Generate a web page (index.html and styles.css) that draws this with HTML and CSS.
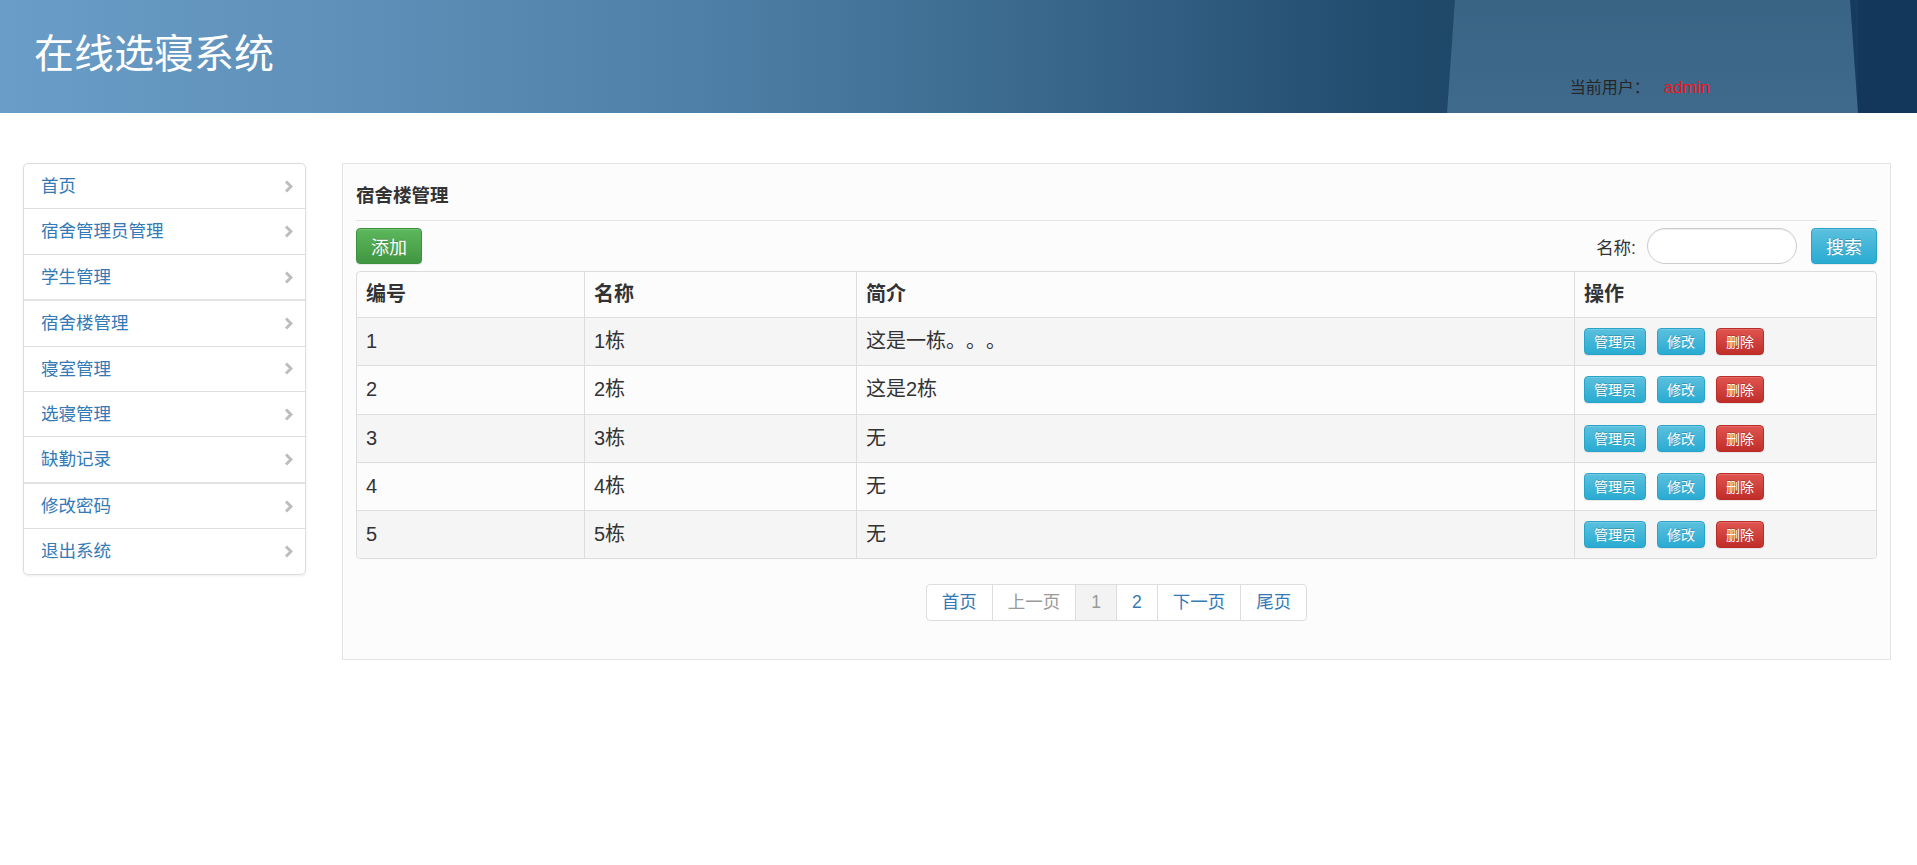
FILE: index.html
```html
<!DOCTYPE html>
<html lang="zh-CN">
<head>
    <meta charset="UTF-8">
    <meta name="viewport" content="width=device-width, initial-scale=1.0">
    <title>在线选寝系统</title>
    <link rel="stylesheet" href="styles.css">
</head>
<body>

    <header class="topbar">
        <h1 class="brand">在线选寝系统</h1>
        <div class="user-info">当前用户：<span class="user-name">admin</span></div>
    </header>

    <div class="layout">

        <!-- 左侧菜单 -->
        <nav class="side-menu">
            <a class="menu-item" href="#">首页<svg class="chevron" viewBox="0 0 9 13"><path d="M2 1.5l5 5-5 5"/></svg></a>
            <a class="menu-item" href="#">宿舍管理员管理<svg class="chevron" viewBox="0 0 9 13"><path d="M2 1.5l5 5-5 5"/></svg></a>
            <a class="menu-item" href="#">学生管理<svg class="chevron" viewBox="0 0 9 13"><path d="M2 1.5l5 5-5 5"/></svg></a>
            <a class="menu-item group-start" href="#">宿舍楼管理<svg class="chevron" viewBox="0 0 9 13"><path d="M2 1.5l5 5-5 5"/></svg></a>
            <a class="menu-item" href="#">寝室管理<svg class="chevron" viewBox="0 0 9 13"><path d="M2 1.5l5 5-5 5"/></svg></a>
            <a class="menu-item" href="#">选寝管理<svg class="chevron" viewBox="0 0 9 13"><path d="M2 1.5l5 5-5 5"/></svg></a>
            <a class="menu-item" href="#">缺勤记录<svg class="chevron" viewBox="0 0 9 13"><path d="M2 1.5l5 5-5 5"/></svg></a>
            <a class="menu-item group-start" href="#">修改密码<svg class="chevron" viewBox="0 0 9 13"><path d="M2 1.5l5 5-5 5"/></svg></a>
            <a class="menu-item" href="#">退出系统<svg class="chevron" viewBox="0 0 9 13"><path d="M2 1.5l5 5-5 5"/></svg></a>
        </nav>

        <!-- 宿舍楼列表 -->
        <main class="content-panel">
            <h3 class="panel-title">宿舍楼管理</h3>

            <div class="toolbar">
                <button class="btn btn-success btn-lg" type="button">添加</button>
                <form class="search-form">
                    <label for="buildName">名称:</label>
                    <input id="buildName" type="text">
                    <button class="btn btn-info btn-lg" type="button">搜索</button>
                </form>
            </div>

            <table class="data-table">
                <colgroup>
                    <col style="width: 227px">
                    <col style="width: 272px">
                    <col style="width: 718px">
                    <col>
                </colgroup>
                <thead>
                    <tr><th>编号</th><th>名称</th><th>简介</th><th>操作</th></tr>
                </thead>
                <tbody>
                    <tr>
                        <td>1</td><td>1栋</td><td>这是一栋。。。</td>
                        <td><div class="actions"><button class="btn btn-info btn-xs">管理员</button><button class="btn btn-info btn-xs">修改</button><button class="btn btn-danger btn-xs">删除</button></div></td>
                    </tr>
                    <tr>
                        <td>2</td><td>2栋</td><td>这是2栋</td>
                        <td><div class="actions"><button class="btn btn-info btn-xs">管理员</button><button class="btn btn-info btn-xs">修改</button><button class="btn btn-danger btn-xs">删除</button></div></td>
                    </tr>
                    <tr>
                        <td>3</td><td>3栋</td><td>无</td>
                        <td><div class="actions"><button class="btn btn-info btn-xs">管理员</button><button class="btn btn-info btn-xs">修改</button><button class="btn btn-danger btn-xs">删除</button></div></td>
                    </tr>
                    <tr>
                        <td>4</td><td>4栋</td><td>无</td>
                        <td><div class="actions"><button class="btn btn-info btn-xs">管理员</button><button class="btn btn-info btn-xs">修改</button><button class="btn btn-danger btn-xs">删除</button></div></td>
                    </tr>
                    <tr>
                        <td>5</td><td>5栋</td><td>无</td>
                        <td><div class="actions"><button class="btn btn-info btn-xs">管理员</button><button class="btn btn-info btn-xs">修改</button><button class="btn btn-danger btn-xs">删除</button></div></td>
                    </tr>
                </tbody>
            </table>

            <ul class="pager">
                <li><a href="#">首页</a></li>
                <li class="disabled"><span>上一页</span></li>
                <li class="current"><span>1</span></li>
                <li><a href="#">2</a></li>
                <li><a href="#">下一页</a></li>
                <li><a href="#">尾页</a></li>
            </ul>
        </main>
    </div>

</body>
</html>
```

FILE: styles.css
```css
body {
    margin: 0;
    font-family: "Liberation Sans", "Noto Sans CJK SC", sans-serif;
    color: #333;
    background-color: #fff;
    text-spacing-trim: space-all;
}

/* 顶部横幅 */
.topbar {
    position: relative;
    height: 113px;
    display: flex;
    justify-content: space-between;
    padding: 0 207px 0 34px;
    overflow: hidden;
    background: linear-gradient(90deg, #6a9dc7 0%, #5e90b9 18%, #4f80a7 36%, #3f6e93 50%, #2f5c80 62%, #254f71 70%, #1f4869 75%, #14395c 100%);
}

.topbar::before {
    content: "";
    position: absolute;
    top: 0;
    bottom: 0;
    left: 1447px;
    width: 411px;
    clip-path: polygon(8px 0, 403px 0, 411px 100%, 0 100%);
    background: linear-gradient(180deg, #3a6484 0%, #3f6a8b 100%);
}

.topbar::after {
    content: "";
    position: absolute;
    top: 0;
    bottom: 0;
    left: 1858px;
    right: 0;
    background: #12375a;
}

.brand {
    position: relative;
    z-index: 1;
    margin: 0;
    padding-top: 30px;
    font-family: "Noto Sans CJK SC", sans-serif;
    font-size: 40px;
    font-weight: 400;
    line-height: 42px;
    color: #fff;
}

.user-info {
    position: relative;
    z-index: 1;
    align-self: flex-end;
    margin-bottom: 16px;
    font-size: 16px;
    line-height: 18px;
    color: #262626;
}

.user-name {
    margin-left: 14px;
    font-size: 17px;
    color: #f0141e;
}

/* 主体布局 */
.layout {
    display: flex;
    align-items: flex-start;
    gap: 36px;
    padding: 50px 26px 0 23px;
}

.side-menu {
    width: 283px;
    flex-shrink: 0;
    display: flex;
    flex-direction: column;
    background-color: #fff;
    border: 1px solid #ddd;
    border-radius: 5px;
    box-shadow: 0 1px 3px rgba(0, 0, 0, 0.08);
    box-sizing: border-box;
}

.menu-item {
    display: flex;
    justify-content: space-between;
    align-items: center;
    padding: 10px 12px 10px 17px;
    font-size: 17.5px;
    line-height: 24.4px;
    color: #337ab7;
    text-decoration: none;
    border-top: 1px solid #ddd;
}

.menu-item:first-child {
    border-top: none;
}

.menu-item.group-start {
    border-top: 2px solid #e3e3e3;
}

.chevron {
    width: 9px;
    height: 13px;
}

.chevron path {
    fill: none;
    stroke: #bdbdbd;
    stroke-width: 3;
}

.content-panel {
    flex: 1;
    min-width: 0;
    padding: 18px 13px 38px;
    background-color: #fcfcfc;
    border: 1px solid #e3e3e3;
}

.panel-title {
    margin: 0;
    padding-bottom: 10px;
    font-size: 18.5px;
    font-weight: 700;
    line-height: 28px;
    border-bottom: 1px solid #e5e5e5;
}

.toolbar {
    display: flex;
    justify-content: space-between;
    align-items: center;
    margin: 7px 0;
}

.search-form {
    display: flex;
    align-items: center;
    margin: 0;
}

.search-form label {
    font-size: 17.5px;
    margin-right: 11px;
}

.search-form input {
    width: 150px;
    height: 36px;
    margin-right: 14px;
    padding: 0 14px;
    box-sizing: border-box;
    border: 1px solid #ccc;
    border-radius: 18px;
    background-color: #fff;
    box-shadow: inset 0 1px 1px rgba(0, 0, 0, 0.075);
    font-size: 16px;
}

/* 按钮 */
.btn {
    display: inline-block;
    border: 1px solid transparent;
    border-radius: 4px;
    color: #fff;
    font-family: "Noto Sans CJK SC", sans-serif;
    text-shadow: 0 -1px 0 rgba(0, 0, 0, 0.2);
    box-shadow: inset 0 1px 0 rgba(255, 255, 255, 0.15), 0 1px 1px rgba(0, 0, 0, 0.075);
    cursor: pointer;
}

.btn-lg {
    height: 36px;
    padding: 0 14px;
    font-size: 18px;
    line-height: 34px;
}

.btn-xs {
    height: 27px;
    padding: 0 9px;
    font-size: 14px;
    line-height: 25px;
}

.btn-success {
    background-image: linear-gradient(to bottom, #5cb85c 0, #419641 100%);
    border-color: #3e8f3e;
}

.btn-info {
    background-image: linear-gradient(to bottom, #5bc0de 0, #2aabd2 100%);
    border-color: #28a4c9;
}

.btn-danger {
    background-image: linear-gradient(to bottom, #e0544f 0, #c12e2a 100%);
    border-color: #b92c28;
}

/* 数据表格 */
.data-table {
    width: 100%;
    table-layout: fixed;
    border-collapse: separate;
    border-spacing: 0;
    border: 1px solid #ddd;
    border-radius: 4px;
    font-size: 20px;
}

.data-table th,
.data-table td {
    text-align: left;
    vertical-align: middle;
    padding: 10px 9px;
    border-left: 1px solid #ddd;
}

.data-table th:first-child,
.data-table td:first-child {
    border-left: none;
}

.data-table th {
    line-height: 25px;
    font-weight: 700;
}

.data-table td {
    line-height: 27.3px;
    border-top: 1px solid #ddd;
}

.data-table tbody tr:nth-child(odd) td {
    background-color: #f5f5f5;
}

.data-table tbody tr:last-child td:first-child {
    border-bottom-left-radius: 4px;
}

.data-table tbody tr:last-child td:last-child {
    border-bottom-right-radius: 4px;
}

.actions {
    display: flex;
    gap: 11px;
}

/* 分页 */
.pager {
    display: flex;
    justify-content: center;
    list-style: none;
    margin: 25px 0 0;
    padding: 0;
    font-size: 17.5px;
}

.pager li > a,
.pager li > span {
    display: block;
    margin-left: -1px;
    padding: 5px 15px;
    line-height: 25px;
    color: #337ab7;
    text-decoration: none;
    background-color: #fff;
    border: 1px solid #ddd;
}

.pager li:first-child > a {
    margin-left: 0;
    border-radius: 4px 0 0 4px;
}

.pager li:last-child > a {
    border-radius: 0 4px 4px 0;
}

.pager .disabled > span {
    color: #999;
}

.pager .current > span {
    color: #999;
    background-color: #f3f3f3;
}
```
